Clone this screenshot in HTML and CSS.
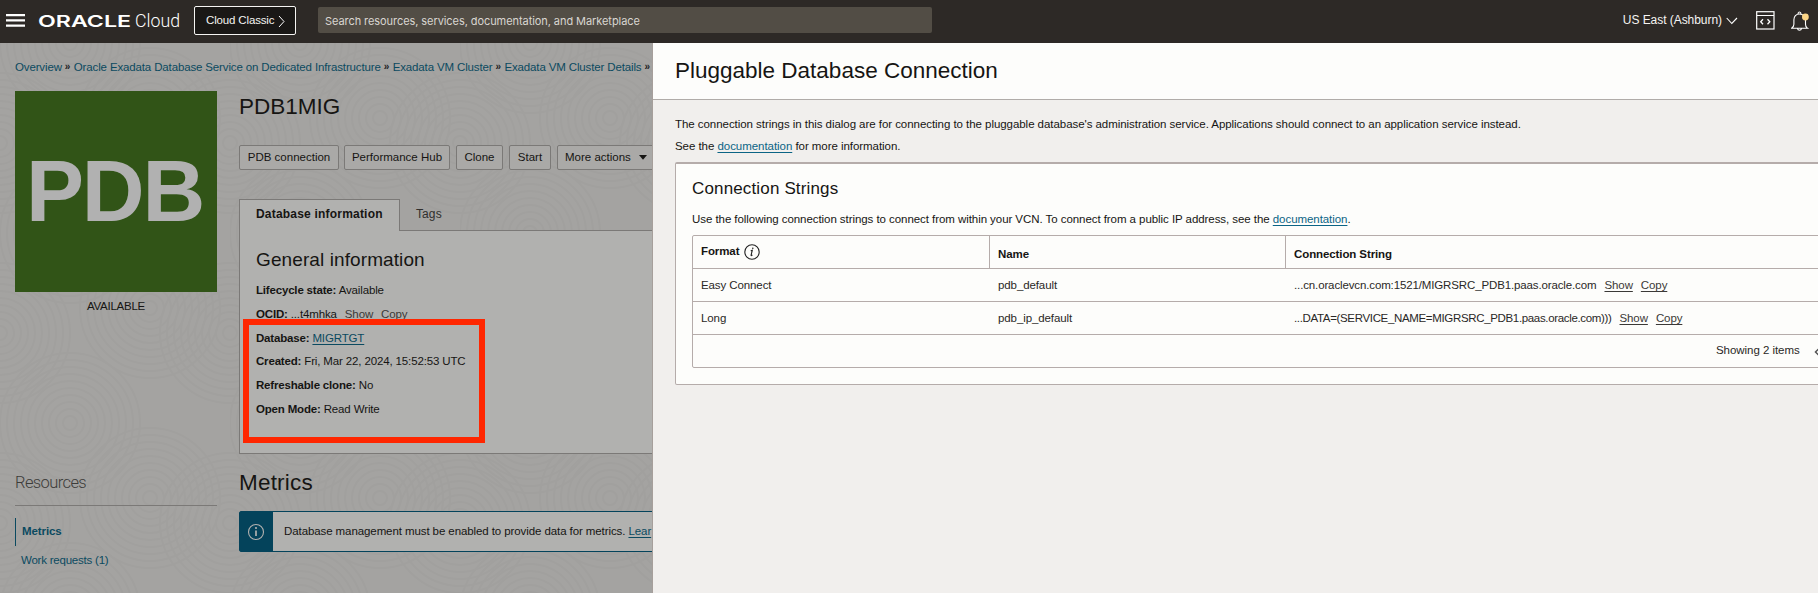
FILE: index.html
```html
<!DOCTYPE html>
<html lang="en">
<head>
<meta charset="utf-8">
<title>Oracle Cloud</title>
<link rel="stylesheet" href="styles.css">
</head>
<body>
<header class="topbar">
  <svg class="menu" width="19" height="13" viewBox="0 0 19 13"><path d="M0 1.2h19M0 6.4h19M0 11.6h19" stroke="#fff" stroke-width="2.2"/></svg>
  <svg class="logo" width="144" height="20" viewBox="0 0 144 20">
    <text class="logo-mark" x="-1" y="15.6" textLength="93" lengthAdjust="spacingAndGlyphs">ORACLE</text>
    <text class="logo-sub" x="96" y="15.6" textLength="45" lengthAdjust="spacingAndGlyphs">Cloud</text>
  </svg>
  <div class="classic"><span>Cloud Classic</span><svg width="7" height="13" viewBox="0 0 7 13"><path d="M1 1l5 5.500-5 5.500" fill="none" stroke="#fff" stroke-width="1"/></svg></div>
  <div class="search">Search resources, services, documentation, and Marketplace</div>
  <div class="region"><span>US East (Ashburn)</span><svg width="12" height="8" viewBox="0 0 12 8"><path d="M.7 1l5.100 5.500L11 1" fill="none" stroke="#fff" stroke-width="1.100"/></svg></div>
  <svg class="dev" width="19" height="19" viewBox="0 0 19 19" fill="none" stroke="#fff"><rect x=".7" y=".7" width="17.300" height="17.300" stroke-width="1.200"/><path d="M1 4.500h17" stroke-width="1"/><path d="M7 8.300l-2.300 2.500L7 13.300M11.500 8.300l2.300 2.500-2.300 2.500" stroke-width="1.300"/></svg>
  <svg class="bell" width="20" height="21" viewBox="0 0 20 21" fill="none" stroke="#fff" stroke-width="1.100"><path d="M.6 17.300h15.800c-1.300-.8-1.900-2-1.900-4V8.800C14.500 5.500 12 3 8.500 3S2.900 5.500 2.900 8.800v4.500c0 2-1 3.200-2.300 4zM7 3c0-2.700 3-2.700 3 0M6.500 17.700c.4 2 3.600 2 4 0"/><circle cx="14.400" cy="6" r="3.400" fill="#fbd486" stroke="none"/></svg>
</header>
<div class="stage">
  <main class="page">
    <svg class="texture" width="653" height="550">
      <defs>
        <g id="rings" fill="none" stroke="#999896" stroke-width="2">
          <circle r="7"/><circle r="14"/><circle r="21"/><circle r="28"/><circle r="35"/><circle r="42"/><circle r="49"/><circle r="56"/><circle r="63"/><circle r="70"/>
        </g>
        <pattern id="waves" width="230" height="190" patternUnits="userSpaceOnUse">
          <use href="#rings" x="70" y="0"/><use href="#rings" x="70" y="190"/><use href="#rings" x="0" y="100"/><use href="#rings" x="230" y="100"/><use href="#rings" x="150" y="75"/>
        </pattern>
      </defs>
      <rect width="653" height="550" fill="url(#waves)" opacity=".3"/>
    </svg>
    <nav class="crumbs"><a class="c1">Overview</a><i>»</i><a class="c2">Oracle Exadata Database Service on Dedicated Infrastructure</a><i>»</i><a class="c3">Exadata VM Cluster</a><i>»</i><a class="c4">Exadata VM Cluster Details</a><i>»</i></nav>
    <div class="columns">
      <aside class="side">
        <div class="tile"><span>PDB</span></div>
        <div class="status">AVAILABLE</div>
        <h3 class="res-title">Resources</h3>
        <div class="res-item active">Metrics</div>
        <div class="res-item">Work requests (1)</div>
      </aside>
      <section class="main">
        <h1 class="title">PDB1MIG</h1>
        <div class="actions">
          <button class="b1">PDB connection</button><button class="b2">Performance Hub</button><button class="b3">Clone</button><button class="b4">Start</button><button class="b5">More actions<svg width="8" height="5"><path d="M0 0h8L4 4.700z" fill="#161513"/></svg></button>
        </div>
        <div class="tabs"><div class="tab on">Database information</div><div class="tab">Tags</div></div>
        <div class="panel">
          <h2>General information</h2>
          <p><b>Lifecycle state:</b> Available</p>
          <p><b>OCID:</b> ...t4mhka <span class="act">Show</span><span class="act">Copy</span></p>
          <p><b>Database:</b> <a class="link">MIGRTGT</a></p>
          <p class="created"><b>Created:</b> Fri, Mar 22, 2024, 15:52:53 UTC</p>
          <p><b>Refreshable clone:</b> No</p>
          <p><b>Open Mode:</b> Read Write</p>
          <div class="highlight"></div>
        </div>
        <h2 class="metrics">Metrics</h2>
        <div class="notice">
          <div class="notice-icon"><svg width="18" height="18" viewBox="0 0 18 18"><circle cx="9" cy="9" r="7.500" fill="none" stroke="#b1b1af" stroke-width="1.100"/><path d="M9 7.500V13" fill="none" stroke="#b1b1af" stroke-width="1.700"/><circle cx="9" cy="5" r="1.100" fill="#b1b1af"/></svg></div>
          <div class="notice-text">Database management must be enabled to provide data for metrics. <a class="link">Lear</a></div>
        </div>
      </section>
    </div>
  </main>
  <section class="drawer">
    <h1 class="drawer-title">Pluggable Database Connection</h1>
    <div class="drawer-body">
      <p class="intro">The connection strings in this dialog are for connecting to the pluggable database's administration service. Applications should connect to an application service instead.</p>
      <p class="see">See the <a class="link">documentation</a> for more information.</p>
      <div class="card">
        <h2>Connection Strings</h2>
        <p class="use">Use the following connection strings to connect from within your VCN. To connect from a public IP address, see the <a class="link">documentation</a>.</p>
        <div class="table">
          <div class="row head"><div class="fmt"><span>Format</span><svg width="16" height="16" viewBox="0 0 16 16"><circle cx="8" cy="8" r="7.200" fill="none" stroke="#222" stroke-width="1.100"/><path d="M6.700 6.700l1.600-.5-1.200 5c-.1.600.6.500 1.300-.3" fill="none" stroke="#222" stroke-width="1.100"/><circle cx="8.800" cy="4.200" r=".8" fill="#222"/></svg></div><div>Name</div><div>Connection String</div></div>
          <div class="row"><div>Easy Connect</div><div>pdb_default</div><div><span class="s1">...cn.oraclevcn.com:1521/MIGRSRC_PDB1.paas.oracle.com</span><span class="act u">Show</span><span class="act u">Copy</span></div></div>
          <div class="row"><div>Long</div><div>pdb_ip_default</div><div><span class="s2">...DATA=(SERVICE_NAME=MIGRSRC_PDB1.paas.oracle.com)))</span><span class="act u">Show</span><span class="act u">Copy</span></div></div>
          <div class="foot"><span>Showing 2 items</span><svg width="8" height="12" viewBox="0 0 8 12"><path d="M6 1.500L1.500 6 6 10.500" fill="none" stroke="#555" stroke-width="1.500"/></svg></div>
        </div>
      </div>
    </div>
  </section>
</div>
</body>
</html>
```
FILE: styles.css
```css
* { box-sizing: border-box; }
html, body { margin: 0; height: 593px; overflow: hidden; }
body { font: 11.5px/16px "Liberation Sans", Arial, sans-serif; color: #161513; letter-spacing: -.05px; }
h1, h2, h3, p { margin: 0; font-weight: 400; white-space: nowrap; }
svg { flex: none; display: block; }

.topbar { height: 43px; background: #2d2926; color: #f5f4f2; display: flex; align-items: flex-start; white-space: nowrap; }
.menu { margin: 14px 0 0 6px; }
.logo { margin: 11px 0 0 14px; overflow: visible; }
.logo-mark { font: 600 16.5px Inter, sans-serif; fill: #fff; letter-spacing: 0; }
.logo-sub { font: 300 17.5px Roboto, sans-serif; fill: #fff; letter-spacing: 0; }
.classic { margin: 6px 0 0 11px; width: 102px; height: 29px; border: 1px solid #f5f4f2; border-radius: 2px; background: #1a1816; display: flex; gap: 4px; padding: 5px 0 0 11px; letter-spacing: -.15px; }
.classic svg { margin-top: 3px; }
.search { margin: 7px 0 0 22px; width: 614px; height: 26px; border-radius: 2px; background: #524d45; color: #d9d6d1; font: 11px/24px Inter, sans-serif; letter-spacing: -.07px; padding: 2px 0 0 7px; }
.region { margin: 11px 0 0 auto; display: flex; gap: 4px; font-size: 12px; line-height: 18px; }
.region svg { margin-top: 6px; }
.dev { margin: 11px 0 0 18px; }
.bell { margin: 11px 7px 0 16px; }

.stage { height: 550px; display: flex; }
.page { width: 653px; height: 550px; flex: none; overflow: hidden; background: #a4a3a1; position: relative; border-right: 1px solid #a69f9b; }
.texture { position: absolute; left: 0; top: 0; }
.crumbs { position: relative; height: 48px; padding: 16px 0 0 15px; color: #0b4a60; display: flex; white-space: nowrap; letter-spacing: -.14px; }
.crumbs i { font-style: normal; font-weight: 700; color: #222; width: 12px; padding-left: 3px; font-size: 10px; flex: none; }
.columns { position: relative; display: flex; padding-left: 15px; gap: 22px; }
.side { width: 202px; flex: none; }
.tile { height: 201px; background: #315417; color: #b1b1b1; font-weight: 700; font-size: 87px; line-height: 200px; letter-spacing: -2.2px; padding-left: 11px; }
.status { text-align: center; padding-top: 6px; width: 202px; letter-spacing: -.25px; }
.res-title { height: 192px; padding-top: 154px; font: 300 16.5px/30px Roboto, sans-serif; letter-spacing: -.6px; color: #3d3c3a; border-bottom: 1px solid #7b7977; }
.res-item { height: 28px; line-height: 28px; color: #0b4a60; padding-left: 6px; letter-spacing: -.22px; }
.res-item.active { margin-top: 12px; border-left: 1px solid #0b4a60; font-weight: 700; line-height: 27px; letter-spacing: -.1px; }
.main { width: 600px; flex: none; }
.title { height: 54px; font-size: 22.5px; line-height: 32.5px; letter-spacing: 0; }
.actions { display: flex; }
.actions button { font: inherit; color: inherit; letter-spacing: 0; height: 25px; padding: 0 0 2px; margin-right: 6px; border: 1px solid #7b7977; border-radius: 2px; background: #aaa9a7; white-space: nowrap; }
.actions .b1 { width: 100px; margin-right: 5px; }
.actions .b2 { width: 106px; }
.actions .b3 { width: 47px; }
.actions .b4 { width: 42px; }
.actions .b5 { width: 110px; display: flex; align-items: center; gap: 8px; padding-left: 7px; }
.b5 svg { position: relative; top: 1px; }
.tabs { height: 32px; margin-top: 29px; display: flex; }
.tab { padding-left: 16px; line-height: 30px; font-size: 12px; letter-spacing: .1px; border-bottom: 1px solid #7b7977; flex: 1; color: #302f2d; }
.tab.on { flex: none; width: 161px; font-weight: 700; line-height: 29px; letter-spacing: .2px; border: 1px solid #7b7977; border-bottom: 0; background: #b1b1af; color: #161513; }
.panel { height: 223px; border: solid #7b7977; border-width: 0 0 1px 1px; background: #b1b1af; padding: 12px 0 0 16px; position: relative; }
.panel h2 { height: 35px; font-size: 19px; line-height: 33px; letter-spacing: .1px; }
.panel p { height: 23.8px; line-height: 24px; letter-spacing: -.14px; }
.panel b { letter-spacing: -.18px; }
.act { margin-left: 8px; color: #3b3937; }
.panel .act:first-of-type { margin-left: 5px; }
.u { text-decoration: underline; text-underline-offset: 2px; }
.link { color: #0b6485; text-decoration: underline; text-underline-offset: 2px; }
.page .link { color: #0b4a60; }
.highlight { position: absolute; left: 3px; top: 88px; width: 242px; height: 124px; border: 6px solid #ff2600; }
.metrics { font-size: 22.5px; line-height: 29px; height: 57px; padding-top: 14px; letter-spacing: .2px; }
.notice { height: 41px; border: 1px solid #04435b; border-radius: 2px; display: flex; background: #b1b1af; white-space: nowrap; }
.notice-icon { width: 33px; background: #04435b; padding: 11px 0 0 7px; }
.notice-text { padding-left: 11px; line-height: 38px; letter-spacing: -.09px; }

.drawer { flex: 1; min-width: 0; overflow: hidden; background: #f1efed; }
.drawer-title { height: 57px; border-bottom: 1px solid #b0aca8; background: #fdfdfb; padding: 11px 0 0 22px; font-size: 22.5px; line-height: 33px; letter-spacing: 0; }
.drawer-body { padding: 16px 0 0 22px; width: 1300px; }
.intro, .see { height: 22px; }
.see { height: 24px; }
.card { height: 223px; border: 1px solid #b5acaa; border-top-width: 2px; border-radius: 2px; background: #fdfdfb; padding: 10px 17px 0 16px; }
.card h2 { font-size: 17px; line-height: 29px; height: 37px; letter-spacing: .15px; }
.use { height: 24px; letter-spacing: -.06px; }
.table { height: 133px; border: 1px solid #b5acaa; border-radius: 2px; }
.row { display: grid; grid-template-columns: 297px 296px 1fr; height: 33px; border-bottom: 1px solid #b5acaa; line-height: 32px; color: #2a2826; letter-spacing: -.1px; }
.row > div { padding-left: 8px; white-space: nowrap; height: 32px; }
.head { font-weight: 700; line-height: 36px; color: #161513; }
.head > div { border-right: 1px solid #b5acaa; }
.head .fmt { display: flex; line-height: 30px; gap: 5px; }
.fmt svg { margin-top: 8px; }
.s1 { letter-spacing: -.13px; }
.s2 { letter-spacing: -.34px; }
.foot { display: flex; gap: 14px; line-height: 30px; padding-left: 1023px; color: #2a2826; }
.foot svg { margin-top: 11px; }
```
